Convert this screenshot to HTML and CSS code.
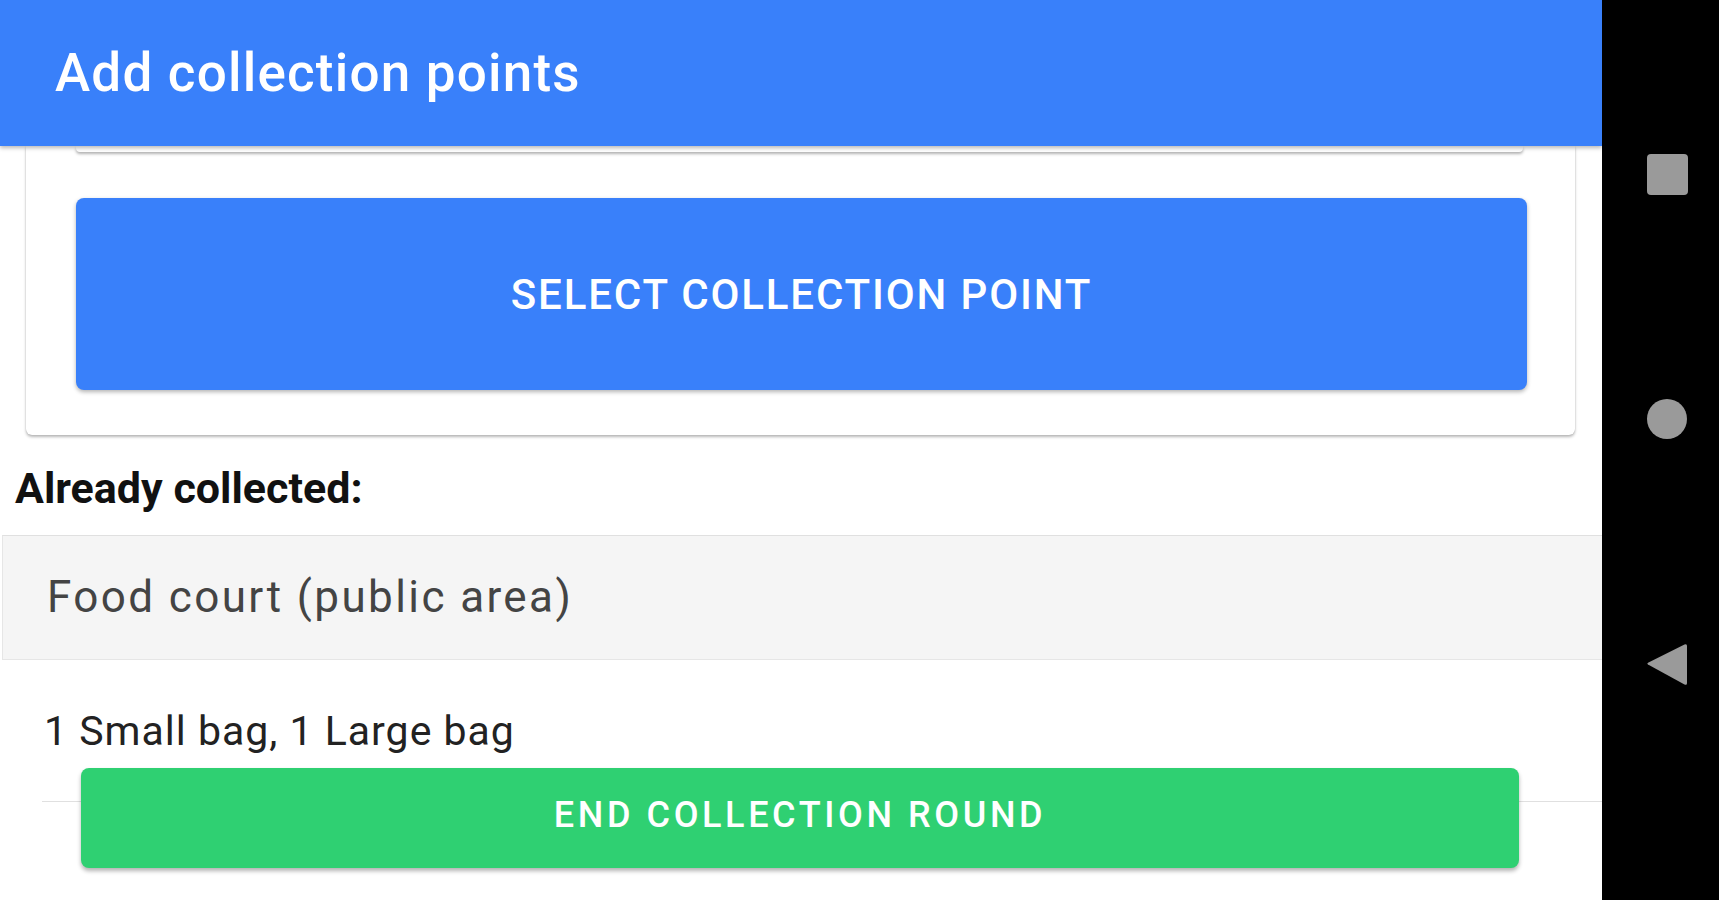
FILE: index.html
```html
<!DOCTYPE html>
<html lang="en">
<head>
<meta charset="utf-8">
<title>Add collection points</title>
<link rel="stylesheet" href="styles.css">
</head>
<body>
<div class="screen">
  <div class="app">
    <header class="appbar">
      <h1 class="appbar-title">Add collection points</h1>
    </header>
    <main class="content">
      <section class="card">
        <div class="card-stub"></div>
        <button class="btn btn-primary" type="button">SELECT COLLECTION POINT</button>
      </section>
      <h2 class="section-label">Already collected:</h2>
      <ul class="list">
        <li class="list-header">Food court (public area)</li>
        <li class="list-item"><div class="list-item-inner">1 Small bag, 1 Large bag</div></li>
      </ul>
    </main>
    <button class="btn btn-success" type="button">END COLLECTION ROUND</button>
  </div>
  <nav class="navbar">
    <svg class="nav-icon" width="41" height="41" viewBox="0 0 41 41"><rect x="0" y="0" width="41" height="41" rx="4" fill="#9a9a9a"/></svg>
    <svg class="nav-icon" width="40" height="40" viewBox="0 0 40 40"><circle cx="20" cy="20" r="20" fill="#9a9a9a"/></svg>
    <svg class="nav-icon" width="44" height="45" viewBox="0 0 44 45"><path d="M3 22.5 Q1.5 21.6 3 20.7 L39.5 2.5 Q42 1.3 42 4 L42 41 Q42 43.7 39.5 42.5 Z" fill="#9a9a9a"/></svg>
  </nav>
</div>
</body>
</html>
```

FILE: styles.css
```css
* { box-sizing: border-box; }
html, body { margin: 0; padding: 0; }
body {
  font-family: Roboto, "Noto Sans", "Liberation Sans", sans-serif;
  background: #000;
}
.screen {
  display: flex;
  width: 1719px;
  height: 900px;
  overflow: hidden;
}
.app {
  position: relative;
  flex: 0 0 1602px;
  height: 900px;
  background: #fff;
  overflow: hidden;
  display: flex;
  flex-direction: column;
}
.appbar {
  position: relative;
  z-index: 2;
  height: 146px;
  flex: 0 0 146px;
  background: #3980fa;
  display: flex;
  align-items: center;
  padding-left: 55px;
  box-shadow: 0 2px 4px rgba(0,0,0,0.28);
}
.appbar-title {
  margin: 0;
  color: #fff;
  font-size: 53px;
  font-weight: 500;
  line-height: normal;
  letter-spacing: 1.2px;
}
.content {
  position: relative;
  z-index: 1;
  display: flex;
  flex-direction: column;
}
.card {
  margin: 0 27px 0 26px;
  padding: 0 48px 45px 50px;
  background: #fff;
  border-radius: 0 0 6px 6px;
  box-shadow: 0 2px 3px rgba(0,0,0,0.28), 0 0 1px rgba(0,0,0,0.2);
}
.card-stub {
  height: 6px;
  margin-right: 4px;
  background: #fff;
  border-radius: 0 0 4px 4px;
  box-shadow: 0 2px 3px rgba(0,0,0,0.3);
}
.btn {
  display: flex;
  align-items: center;
  justify-content: center;
  border: none;
  color: #fff;
  font-family: Roboto, "Noto Sans", "Liberation Sans", sans-serif;
  font-weight: 500;
  padding: 0;
  cursor: pointer;
}
.btn-primary {
  width: 100%;
  height: 192px;
  margin-top: 46px;
  background: #3980fa;
  border-radius: 8px;
  font-size: 42px;
  letter-spacing: 1.85px;
  box-shadow: 0 2px 4px rgba(0,0,0,0.3);
}
.section-label {
  margin: 28px 0 22px 15px;
  font-size: 43px;
  font-weight: 700;
  line-height: normal;
  color: #111;
}
.list {
  list-style: none;
  margin: 0;
  padding: 0;
}
.list-header {
  height: 125px;
  margin-left: 2px;
  padding: 35px 0 0 44px;
  background: #f5f5f5;
  border-top: 1px solid #e0e0e0;
  border-bottom: 1px solid #e6e6e6;
  border-left: 1px solid #e6e6e6;
  font-size: 44px;
  line-height: normal;
  letter-spacing: 2.4px;
  color: #444;
}
.list-item {
  height: 142px;
}
.list-item-inner {
  height: 142px;
  margin-left: 42px;
  padding: 47px 0 0 2px;
  border-bottom: 1px solid #e0e0e0;
  font-size: 41px;
  line-height: normal;
  letter-spacing: 1px;
  color: #222;
}
.btn-success {
  position: absolute;
  z-index: 3;
  left: 81px;
  top: 768px;
  width: 1438px;
  height: 100px;
  padding-bottom: 6px;
  background: #2fd072;
  border-radius: 8px;
  font-size: 36px;
  letter-spacing: 3.6px;
  box-shadow: 0 3px 4px rgba(0,0,0,0.3);
}
.navbar {
  flex: 1;
  background: #000;
  display: flex;
  flex-direction: column;
  align-items: center;
  padding: 154px 0 0 13px;
  gap: 204px;
}
.nav-icon { display: block; flex: 0 0 auto; }
.nav-icon:last-child { margin-top: -1px; }
```
